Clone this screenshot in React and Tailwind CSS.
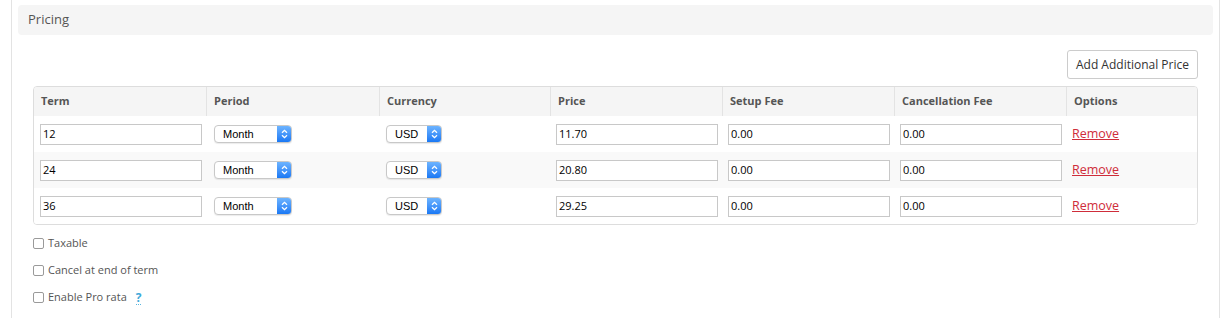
import React from 'react';

const rows = [
  { term: '12', price: '11.70' },
  { term: '24', price: '20.80' },
  { term: '36', price: '29.25' },
];

const cols = 'grid grid-cols-[172px_173px_171px_172px_172px_172px_1fr]';

function MacSelect({ value, width }) {
  return (
    <div
      className={`flex h-[18px] ${width} items-stretch overflow-hidden rounded-[4px] border border-[#c8c8c8] bg-white shadow-[0_1px_1px_rgba(0,0,0,0.08)]`}
    >
      <span className="flex flex-1 items-center pl-[8px] font-['Liberation_Sans',sans-serif] text-[11px] text-black">
        {value}
      </span>
      <span className="flex w-[14px] items-center justify-center bg-gradient-to-b from-[#6cb3ff] to-[#1878f4]">
        <svg width="7" height="10" viewBox="0 0 7 10" fill="none" stroke="white" strokeWidth="1.3">
          <path d="M1 3.8 L3.5 1.3 L6 3.8" />
          <path d="M1 6.2 L3.5 8.7 L6 6.2" />
        </svg>
      </span>
    </div>
  );
}

function TextBox({ value }) {
  return (
    <div className="flex h-[21px] w-[162px] items-center border border-[#c8c8c8] bg-white pl-[2px] font-['Open_Sans',sans-serif] text-[11px] text-black">
      {value}
    </div>
  );
}

function Check({ label, help }) {
  return (
    <label className="flex h-[27px] items-center gap-[4px] text-[11px] text-[#555]">
      <span className="h-[11px] w-[11px] rounded-[2px] border border-[#9a9a9a] bg-white" />
      <span>{label}</span>
      {help && (
        <span className="ml-[5px] border-b border-dotted border-[#5bb6de] text-[12px] font-bold leading-[13px] text-[#3fa9d9]">
          ?
        </span>
      )}
    </label>
  );
}

export default function App() {
  return (
    <div className="h-[318px] w-[1230px] bg-white pl-[11px] pr-[10px] font-['Open_Sans',sans-serif]">
      <div className="h-full border-x border-[#e3e3e3] px-[6px] pt-[5px]">
        <div className="flex h-[30px] items-center rounded-[4px] bg-[#f5f5f5] px-[10px] text-[13px] text-[#555]">
          Pricing
        </div>

        <div className="px-[15px]">
          <div className="flex justify-end pt-[15px]">
            <button className="h-[29px] w-[131px] rounded-[3px] border border-[#ccc] bg-white text-[12px] text-[#333]">
              Add Additional Price
            </button>
          </div>

          <div className="mt-[7px] overflow-hidden rounded-[4px] border border-[#ddd]">
            <div className={`${cols} h-[29px] bg-[#f5f5f5] text-[11px] font-bold text-[#555]`}>
              {['Term', 'Period', 'Currency', 'Price', 'Setup Fee', 'Cancellation Fee', 'Options'].map((h, i) => (
                <div key={h} className={`flex items-center px-[7px] ${i > 0 ? 'border-l border-[#e3e3e3]' : ''}`}>
                  {h}
                </div>
              ))}
            </div>
            {rows.map((r, i) => (
              <div key={r.term} className={`${cols} h-[36px] items-center ${i === 1 ? 'bg-[#f9f9f9]' : 'bg-white'}`}>
                <div className="pl-[6px]">
                  <TextBox value={r.term} />
                </div>
                <div className="pl-[8px]">
                  <MacSelect value="Month" width="w-[78px]" />
                </div>
                <div className="pl-[7px]">
                  <MacSelect value="USD" width="w-[56px]" />
                </div>
                <div className="pl-[6px]">
                  <TextBox value={r.price} />
                </div>
                <div className="pl-[6px]">
                  <TextBox value="0.00" />
                </div>
                <div className="pl-[6px]">
                  <TextBox value="0.00" />
                </div>
                <div className="flex items-center pl-[6px] leading-none">
                  <a href="#" className="text-[12.5px] leading-[16px] text-[#cf2d3a] underline">
                    Remove
                  </a>
                </div>
              </div>
            ))}
          </div>

          <div className="pt-[5px]">
            <Check label="Taxable" />
            <Check label="Cancel at end of term" />
            <Check label="Enable Pro rata" help />
          </div>
        </div>
      </div>
    </div>
  );
}
